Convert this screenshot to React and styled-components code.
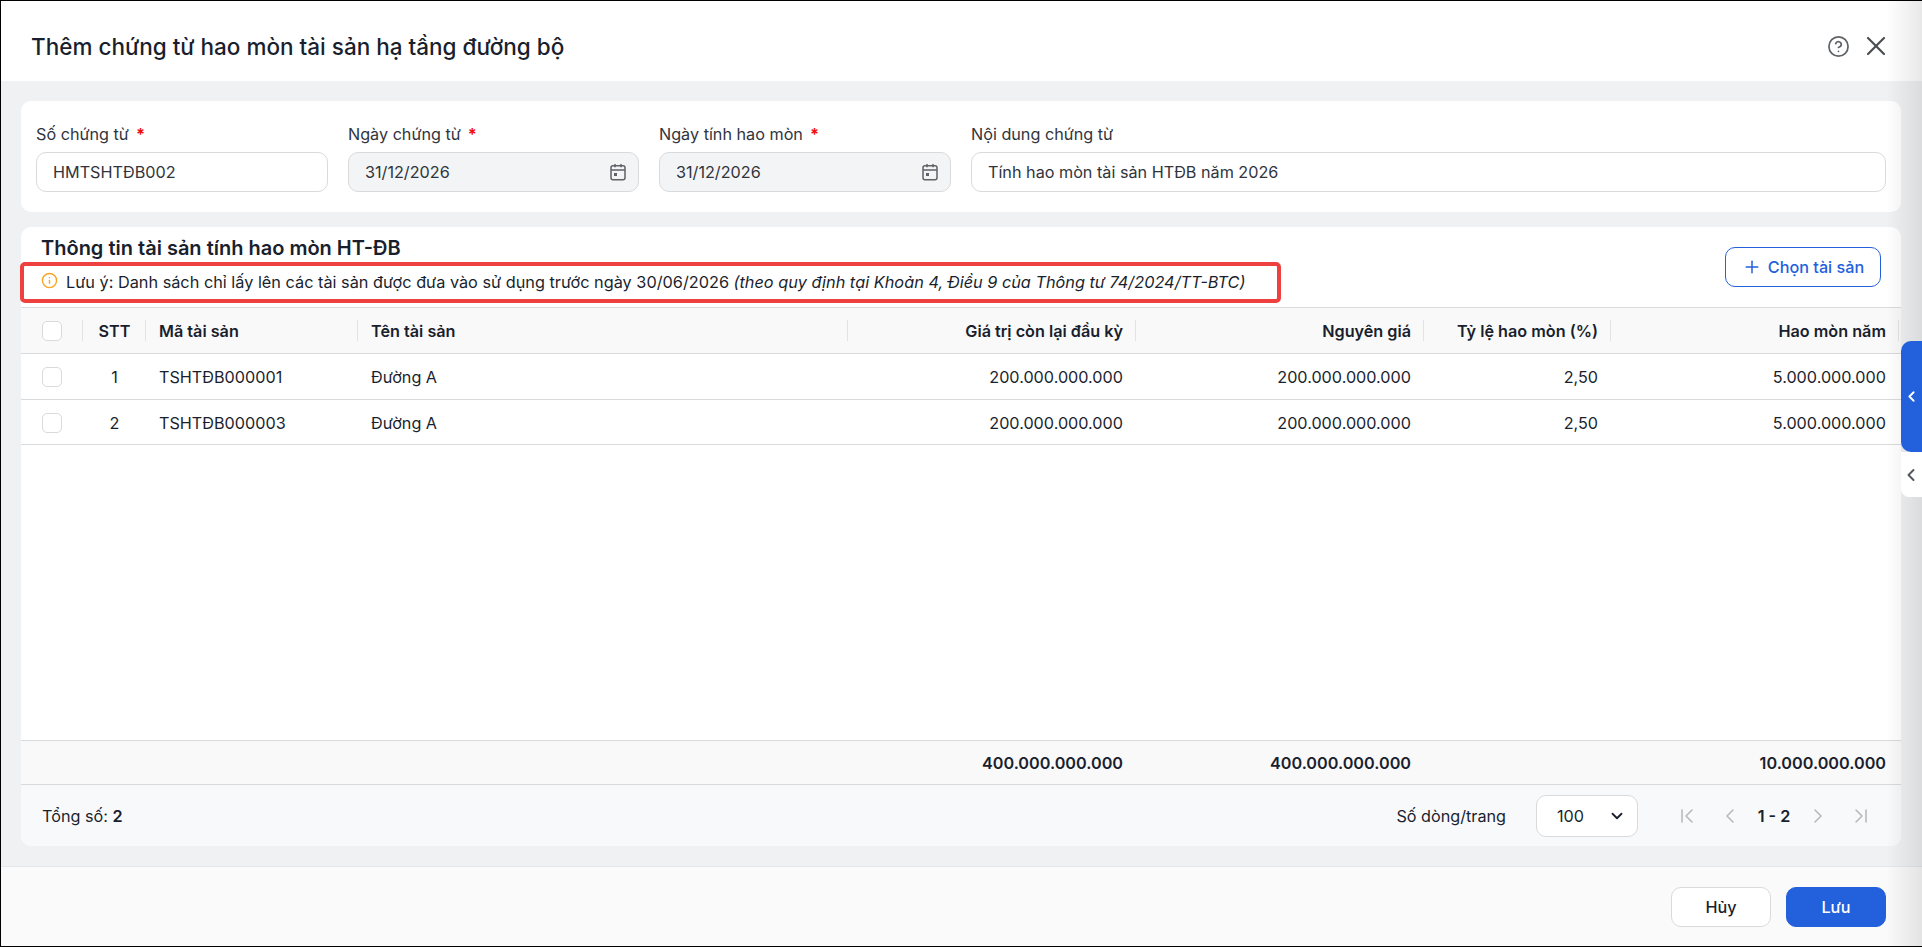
import styled, { createGlobalStyle } from "styled-components";
import {
  ChevronDown,
  ChevronFirst,
  ChevronLast,
  ChevronLeft,
  ChevronRight,
  CircleHelp,
  Info,
  Plus,
  X,
} from "lucide-react";

const GlobalStyle = createGlobalStyle`
  html, body {
    margin: 0;
    padding: 0;
    overflow: hidden;
  }
  * {
    box-sizing: border-box;
  }
  body {
    font-family: Inter, "Noto Sans", "Liberation Sans", sans-serif;
    font-size: 16.2px;
    color: #1a1f2e;
  }
`;

const COLUMNS = "62px 63px 212px 490px 288px 288px 187px 288px";

const Page = styled.div`
  position: relative;
  width: 1922px;
  height: 947px;
  display: flex;
  flex-direction: column;
  background: #f0f1f3;
  border-top: 1px solid #000;
  border-left: 1px solid #000;
  border-bottom: 1px solid #000;
`;

const Header = styled.header`
  height: 80px;
  flex: none;
  display: flex;
  align-items: center;
  justify-content: space-between;
  padding: 10px 30px 0 30px;
  background: #fff;
`;

const Title = styled.h1`
  margin: 0;
  font-size: 22.5px;
  font-weight: 500;
  color: #1a1f2e;
`;

const HeaderIcons = styled.div`
  display: flex;
  align-items: center;
  gap: 10px;
`;

const HelpIcon = styled(CircleHelp)`
  color: #5f6368;
`;

const CloseIcon = styled(X)`
  color: #4a4d52;
`;

const Body = styled.main`
  flex: 1;
  min-height: 0;
  display: flex;
  flex-direction: column;
  gap: 15px;
  padding: 20px 21px 20px 20px;
`;

const FormCard = styled.section`
  height: 111px;
  flex: none;
  display: grid;
  grid-template-columns: 292px 291px 292px 1fr;
  gap: 20px;
  padding: 0 15px;
  background: #fff;
  border-radius: 10px;
`;

const Field = styled.div`
  display: flex;
  flex-direction: column;
  padding-top: 21px;
`;

const Label = styled.label`
  height: 30px;
  line-height: 24px;
  color: #30343d;
`;

const Required = styled.span`
  margin-left: 7px;
  color: #f01010;
  font-weight: 700;
`;

const InputBox = styled.div`
  height: 40px;
  display: flex;
  align-items: center;
  justify-content: space-between;
  padding: 0 10px 0 16px;
  color: #30343d;
  border: 1px solid #d9dadc;
  border-radius: 10px;
  background: ${(p) => (p.$disabled ? "#f3f4f5" : "#fff")};
`;

const TableCard = styled.section`
  flex: 1;
  min-height: 0;
  display: flex;
  flex-direction: column;
  background: #fff;
  border-radius: 10px;
`;

const CardHead = styled.div`
  height: 80px;
  flex: none;
  display: flex;
  justify-content: space-between;
  padding-right: 20px;
`;

const HeadLeft = styled.div`
  display: flex;
  flex-direction: column;
  margin-left: -1px;
`;

const SectionTitle = styled.h2`
  height: 35px;
  margin: 0;
  padding: 8px 0 0 21px;
  font-size: 20px;
  line-height: 27px;
  font-weight: 600;
  color: #1a1f2e;
`;

const NoteBox = styled.div`
  width: 1261px;
  height: 41px;
  display: flex;
  align-items: center;
  gap: 8px;
  padding: 0 0 2px 17px;
  font-size: 16.3px;
  color: #1a1f2e;
  border: 4px solid #ef4040;
  border-radius: 5px;
`;

const NoteIcon = styled(Info)`
  flex: none;
  color: #f5a623;
  margin-top: -3px;
`;

const AddButton = styled.button`
  width: 156px;
  height: 40px;
  margin-top: 20px;
  display: flex;
  align-items: center;
  justify-content: center;
  gap: 6px;
  font: inherit;
  font-weight: 500;
  color: #2360dc;
  background: #fff;
  border: 1px solid #2360dc;
  border-radius: 10px;
`;

const Row = styled.div`
  display: grid;
  grid-template-columns: ${COLUMNS};
  flex: none;
  height: ${(p) => p.$height}px;
  padding-top: ${(p) => p.$nudge || 0}px;
  background: ${(p) => p.$bg || "#fff"};
  border-bottom: 1px solid #d9dadc;
`;

const HeadRow = styled(Row)`
  border-top: 1px solid #d9dadc;
`;

const Cell = styled.div`
  display: flex;
  align-items: center;
  justify-content: ${(p) =>
    p.$align === "right" ? "flex-end" : p.$align === "center" ? "center" : "flex-start"};
  padding: ${(p) => (p.$align === "center" ? "0" : "0 13px")};
  font-weight: ${(p) => (p.$bold ? 600 : 400)};
  color: #1a1f2e;
  white-space: nowrap;
`;

const HeadCell = styled(Cell)`
  position: relative;
  font-weight: 600;

  &::after {
    content: "";
    position: absolute;
    right: 0;
    top: 12px;
    bottom: 12px;
    width: 1px;
    background: #e2e3e5;
  }
`;

const Checkbox = styled.span`
  width: 20px;
  height: 20px;
  background: #fff;
  border: 1px solid #d9dadc;
  border-radius: 5px;
`;

const RowsArea = styled.div`
  flex: 1;
  min-height: 0;
`;

const Pager = styled.div`
  height: 61px;
  flex: none;
  display: flex;
  align-items: center;
  justify-content: space-between;
  padding: 0 28px 0 21px;
  background: #f8f9fb;
  border-radius: 0 0 10px 10px;

  b {
    font-weight: 600;
  }
`;

const PagerRight = styled.div`
  display: flex;
  align-items: center;
`;

const PageSize = styled.div`
  width: 102px;
  height: 42px;
  margin: 0 37px 0 30px;
  display: flex;
  align-items: center;
  justify-content: space-between;
  padding: 0 11px 0 20px;
  background: #fff;
  border: 1px solid #d9dadc;
  border-radius: 10px;
`;

const PageNav = styled.div`
  display: flex;
  align-items: center;
  gap: 19px;
  color: #b5b7ba;
`;

const PageRange = styled.span`
  width: 38px;
  margin: 0 -6px;
  text-align: center;
  font-weight: 600;
  color: #1a1f2e;
  white-space: nowrap;
`;

const Footer = styled.footer`
  height: 80px;
  flex: none;
  display: flex;
  align-items: center;
  justify-content: flex-end;
  gap: 15px;
  padding: 0 36px 0 0;
  background: #fafafb;
  border-top: 1px solid #e6e7e9;
`;

const FooterButton = styled.button`
  width: 100px;
  height: 40px;
  font: inherit;
  font-weight: 500;
  color: ${(p) => (p.$primary ? "#fff" : "#1a1f2e")};
  background: ${(p) => (p.$primary ? "#2360dc" : "#fff")};
  border: 1px solid ${(p) => (p.$primary ? "#2360dc" : "#d9dadc")};
  border-radius: 10px;
`;

const EdgeShade = styled.div`
  position: absolute;
  top: 0;
  right: 0;
  bottom: 0;
  width: 36px;
  pointer-events: none;
  background: linear-gradient(to right, rgba(0, 0, 0, 0), rgba(0, 0, 0, 0.09));
`;

const SideTab = styled.button`
  position: absolute;
  right: 0;
  top: ${(p) => p.$top}px;
  width: 21px;
  height: ${(p) => p.$height}px;
  display: flex;
  align-items: center;
  justify-content: center;
  padding: 0 1px 0 0;
  color: ${(p) => (p.$primary ? "#fff" : "#55585d")};
  background: ${(p) => (p.$primary ? "#2360dc" : "#fff")};
  border: none;
  border-radius: ${(p) => (p.$primary ? "10px 0 0 10px" : "0 0 0 8px")};
`;

const CalendarIcon = () => (
  <svg width="20" height="20" viewBox="0 0 20 20" fill="none" stroke="#5f6368" strokeWidth="1.5">
    <rect x="3" y="3.7" width="14" height="14" rx="2" />
    <path d="M3 8h14M7 2v3.2M13 2v3.2" />
    <rect x="6" y="11" width="3" height="3" fill="#5f6368" stroke="none" />
  </svg>
);

const assets = [
  { stt: 1, code: "TSHTĐB000001", height: 46, nudge: 0 },
  { stt: 2, code: "TSHTĐB000003", height: 45, nudge: 1 },
];

export default function App() {
  return (
    <Page>
      <GlobalStyle />
      <Header>
        <Title>Thêm chứng từ hao mòn tài sản hạ tầng đường bộ</Title>
        <HeaderIcons>
          <HelpIcon size={23} strokeWidth={1.8} />
          <CloseIcon size={32} strokeWidth={1.6} />
        </HeaderIcons>
      </Header>

      <Body>
        <FormCard>
          <Field>
            <Label>
              Số chứng từ<Required>*</Required>
            </Label>
            <InputBox>HMTSHTĐB002</InputBox>
          </Field>
          <Field>
            <Label>
              Ngày chứng từ<Required>*</Required>
            </Label>
            <InputBox $disabled>
              31/12/2026
              <CalendarIcon />
            </InputBox>
          </Field>
          <Field>
            <Label>
              Ngày tính hao mòn<Required>*</Required>
            </Label>
            <InputBox $disabled>
              31/12/2026
              <CalendarIcon />
            </InputBox>
          </Field>
          <Field>
            <Label>Nội dung chứng từ</Label>
            <InputBox>Tính hao mòn tài sản HTĐB năm 2026</InputBox>
          </Field>
        </FormCard>

        <TableCard>
          <CardHead>
            <HeadLeft>
              <SectionTitle>Thông tin tài sản tính hao mòn HT-ĐB</SectionTitle>
              <NoteBox>
                <NoteIcon size={17} strokeWidth={2} />
                <span>
                  Lưu ý: Danh sách chỉ lấy lên các tài sản được đưa vào sử dụng trước ngày 30/06/2026{" "}
                  <em>(theo quy định tại Khoản 4, Điều 9 của Thông tư 74/2024/TT-BTC)</em>
                </span>
              </NoteBox>
            </HeadLeft>
            <AddButton>
              <Plus size={20} strokeWidth={1.8} />
              Chọn tài sản
            </AddButton>
          </CardHead>

          <HeadRow $height={47} $bg="#f9f9f9">
            <HeadCell $align="center">
              <Checkbox />
            </HeadCell>
            <HeadCell $align="center">STT</HeadCell>
            <HeadCell>Mã tài sản</HeadCell>
            <HeadCell>Tên tài sản</HeadCell>
            <HeadCell $align="right">Giá trị còn lại đầu kỳ</HeadCell>
            <HeadCell $align="right">Nguyên giá</HeadCell>
            <HeadCell $align="right">Tỷ lệ hao mòn (%)</HeadCell>
            <HeadCell $align="right">Hao mòn năm</HeadCell>
          </HeadRow>

          {assets.map((a) => (
            <Row key={a.stt} $height={a.height} $nudge={a.nudge}>
              <Cell $align="center">
                <Checkbox />
              </Cell>
              <Cell $align="center">{a.stt}</Cell>
              <Cell>{a.code}</Cell>
              <Cell>Đường A</Cell>
              <Cell $align="right">200.000.000.000</Cell>
              <Cell $align="right">200.000.000.000</Cell>
              <Cell $align="right">2,50</Cell>
              <Cell $align="right">5.000.000.000</Cell>
            </Row>
          ))}

          <RowsArea />

          <HeadRow $height={45} $bg="#f9f9fa">
            <Cell />
            <Cell />
            <Cell />
            <Cell />
            <Cell $align="right" $bold>
              400.000.000.000
            </Cell>
            <Cell $align="right" $bold>
              400.000.000.000
            </Cell>
            <Cell />
            <Cell $align="right" $bold>
              10.000.000.000
            </Cell>
          </HeadRow>

          <Pager>
            <span>
              Tổng số: <b>2</b>
            </span>
            <PagerRight>
              Số dòng/trang
              <PageSize>
                100
                <ChevronDown size={18} strokeWidth={2.4} color="#1a1f2e" />
              </PageSize>
              <PageNav>
                <ChevronFirst size={24} strokeWidth={1.5} />
                <ChevronLeft size={24} strokeWidth={1.5} />
                <PageRange>1 - 2</PageRange>
                <ChevronRight size={24} strokeWidth={1.5} />
                <ChevronLast size={24} strokeWidth={1.5} />
              </PageNav>
            </PagerRight>
          </Pager>
        </TableCard>
      </Body>

      <Footer>
        <FooterButton>Hủy</FooterButton>
        <FooterButton $primary>Lưu</FooterButton>
      </Footer>

      <EdgeShade />
      <SideTab $primary $top={340} $height={111}>
        <ChevronLeft size={17} strokeWidth={2.6} />
      </SideTab>
      <SideTab $top={451} $height={45}>
        <ChevronLeft size={20} strokeWidth={2.4} />
      </SideTab>
    </Page>
  );
}
